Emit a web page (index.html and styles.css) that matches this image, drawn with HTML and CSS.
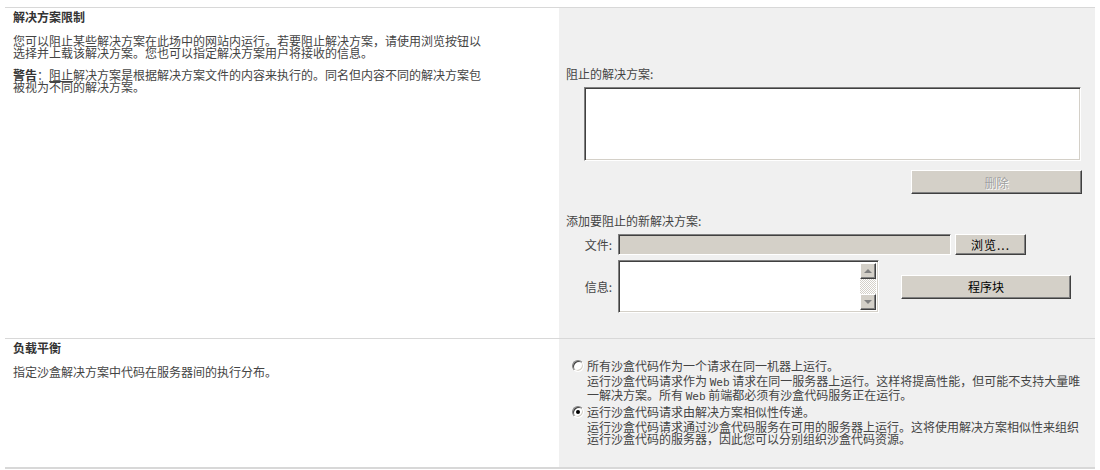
FILE: index.html
```html
<!DOCTYPE html>
<html lang="zh-CN">
<head>
    <meta charset="UTF-8">
    <title>阻止的解决方案</title>
    <link rel="stylesheet" href="styles.css">
</head>
<body>

<div class="page">
    <!-- 解决方案限制 -->
    <div class="section section-block">
        <div class="desc">
            <h3>解决方案限制</h3>
            <p>您可以阻止某些解决方案在此场中的网站内运行。若要阻止解决方案，请使用浏览按钮以<br>选择并上载该解决方案。您也可以指定解决方案用户将接收的信息。</p>
            <p class="warn"><b>警告</b>：<u>阻止</u>解决方案是根据解决方案文件的内容来执行的。同名但内容不同的解决方案包<br>被视为不同的解决方案。</p>
        </div>
        <div class="ctrl">
            <div class="label">阻止的解决方案:</div>
            <textarea class="inset blocked-list"></textarea>
            <div class="right-row">
                <button type="button" class="btn btn-wide" disabled>删除</button>
            </div>

            <div class="label add-label">添加要阻止的新解决方案:</div>
            <div class="field-row file-row">
                <span class="field-label">文件:</span>
                <input type="text" class="inset file-input" disabled>
                <button type="button" class="btn btn-browse">浏览...</button>
            </div>
            <div class="field-row msg-row">
                <span class="field-label">信息:</span>
                <div class="inset msg-box">
                    <textarea class="msg-text"></textarea>
                    <div class="scrollbar">
                        <span class="sb-btn"><i class="arrow up"></i></span>
                        <span class="sb-track"></span>
                        <span class="sb-btn"><i class="arrow down"></i></span>
                    </div>
                </div>
                <button type="button" class="btn btn-wide btn-block">程序块</button>
            </div>
        </div>
    </div>

    <!-- 负载平衡 -->
    <div class="section section-balance">
        <div class="desc">
            <h3>负载平衡</h3>
            <p>指定沙盒解决方案中代码在服务器间的执行分布。</p>
        </div>
        <div class="ctrl radios">
            <label class="option">
                <input type="radio" name="balance">
                <span>所有沙盒代码作为一个请求在同一机器上运行。</span>
            </label>
            <p class="option-note">运行沙盒代码请求作为 <span class="mono">Web</span> 请求在同一服务器上运行。这样将提高性能，但可能不支持大量唯<br>一解决方案。所有 <span class="mono">Web</span> 前端都必须有沙盒代码服务正在运行。</p>
            <label class="option">
                <input type="radio" name="balance" checked>
                <span>运行沙盒代码请求由解决方案相似性传递。</span>
            </label>
            <p class="option-note">运行沙盒代码请求通过沙盒代码服务在可用的服务器上运行。这将使用解决方案相似性来组织<br>运行沙盒代码的服务器，因此您可以分别组织沙盒代码资源。</p>
        </div>
    </div>
</div>

</body>
</html>
```

FILE: styles.css
```css
body {
    margin: 0;
    font-family: "Noto Sans CJK SC", "Liberation Sans", sans-serif;
    font-size: 12px;
    line-height: 12px;
    color: #444;
    background-color: #fff;
}

.page {
    margin: 7px 0 0 5px;
    width: 1090px;
    border-bottom: 2px solid #d8d8d8;
}

.section {
    display: grid;
    grid-template-columns: 554px 536px;
    border-top: 1px solid #d8d8d8;
}

.section-block {
    height: 330px;
}

.section-balance {
    height: 128px;
}

.desc {
    padding: 3px 8px 0 8px;
}

.desc h3 {
    margin: 0;
    font-size: 12px;
    line-height: 12px;
    color: #333;
}

.desc p {
    margin: 12px 0 0 0;
}

.desc p.warn {
    margin-top: 10px;
}

.desc p.warn b {
    color: #333;
}

.ctrl {
    background-color: #f0f0f0;
    padding: 60px 14px 0 7px;
}

.label {
    color: #444;
}

.add-label {
    margin-top: 21px;
}

/* classic sunken field */
.inset {
    box-sizing: border-box;
    border: 1px solid;
    border-color: #808080 #fff #fff #808080;
    box-shadow: inset 1px 1px #404040, inset -1px -1px #d4d0c8;
    background-color: #fff;
    margin: 0;
    padding: 2px;
    font-family: inherit;
    font-size: 12px;
    resize: none;
    outline: none;
}

.blocked-list {
    display: block;
    margin: 7px 0 0 18px;
    width: 497px;
    height: 74px;
}

.right-row {
    display: flex;
    justify-content: flex-end;
    margin-top: 9px;
}

/* classic raised button */
.btn {
    box-sizing: border-box;
    background-color: #d4d0c8;
    border: 1px solid;
    border-color: #fff #404040 #404040 #fff;
    box-shadow: inset -1px -1px #808080;
    font-family: inherit;
    font-size: 12px;
    color: #000;
    padding: 0;
    cursor: pointer;
}

.btn:disabled {
    color: #a0a0a0;
    text-shadow: 1px 1px #fff;
    cursor: default;
}

.btn-wide {
    width: 171px;
    height: 24px;
    margin-right: -1px;
}

.field-row {
    display: flex;
    align-items: center;
}

.field-label {
    width: 46px;
    padding-right: 6px;
    text-align: right;
}

.file-row {
    margin-top: 7px;
    height: 21px;
}

.file-input {
    width: 333px;
    height: 21px;
    background-color: #d4d0c8;
}

.btn-browse {
    width: 71px;
    height: 21px;
    margin-left: 4px;
    letter-spacing: 1px;
}

.msg-row {
    margin-top: 5px;
    height: 53px;
}

.msg-box {
    display: flex;
    width: 261px;
    height: 53px;
    padding: 2px;
}

.msg-text {
    flex: 1;
    border: none;
    outline: none;
    resize: none;
    padding: 0;
    margin: 0;
}

.scrollbar {
    display: flex;
    flex-direction: column;
    width: 16px;
}

.sb-btn {
    box-sizing: border-box;
    display: flex;
    align-items: center;
    justify-content: center;
    height: 16px;
    background-color: #d4d0c8;
    border: 1px solid;
    border-color: #fff #404040 #404040 #fff;
    box-shadow: inset -1px -1px #808080;
}

.sb-track {
    flex: 1;
    background: repeating-conic-gradient(#d4d0c8 0 25%, #fff 0 50%) 0 0 / 2px 2px;
}

.arrow {
    width: 0;
    height: 0;
    border-left: 4px solid transparent;
    border-right: 4px solid transparent;
}

.arrow.up {
    border-bottom: 4px solid #808080;
}

.arrow.down {
    border-top: 4px solid #808080;
}

.btn-block {
    width: 170px;
    margin-left: 22px;
}

/* load balancing options */
.radios {
    padding: 21px 14px 0 13px;
}

.option {
    display: flex;
    align-items: center;
    height: 12px;
}

.option + .option-note + .option {
    margin-top: 3px;
}

.option input {
    appearance: none;
    box-sizing: border-box;
    width: 12px;
    height: 12px;
    margin: 0 3px 0 0;
    border-radius: 50%;
    border: 1px solid;
    border-color: #808080 #fff #fff #808080;
    box-shadow: inset 1px 1px #404040, inset -1px -1px #d4d0c8;
    background-color: #fff;
    display: grid;
    place-items: center;
}

.option input:checked::after {
    content: "";
    width: 4px;
    height: 4px;
    border-radius: 50%;
    background-color: #000;
}

.option-note {
    margin: 3px 0 0 15px;
}

.mono {
    font-family: "DejaVu Sans Mono", monospace;
    font-size: 11px;
}
```
